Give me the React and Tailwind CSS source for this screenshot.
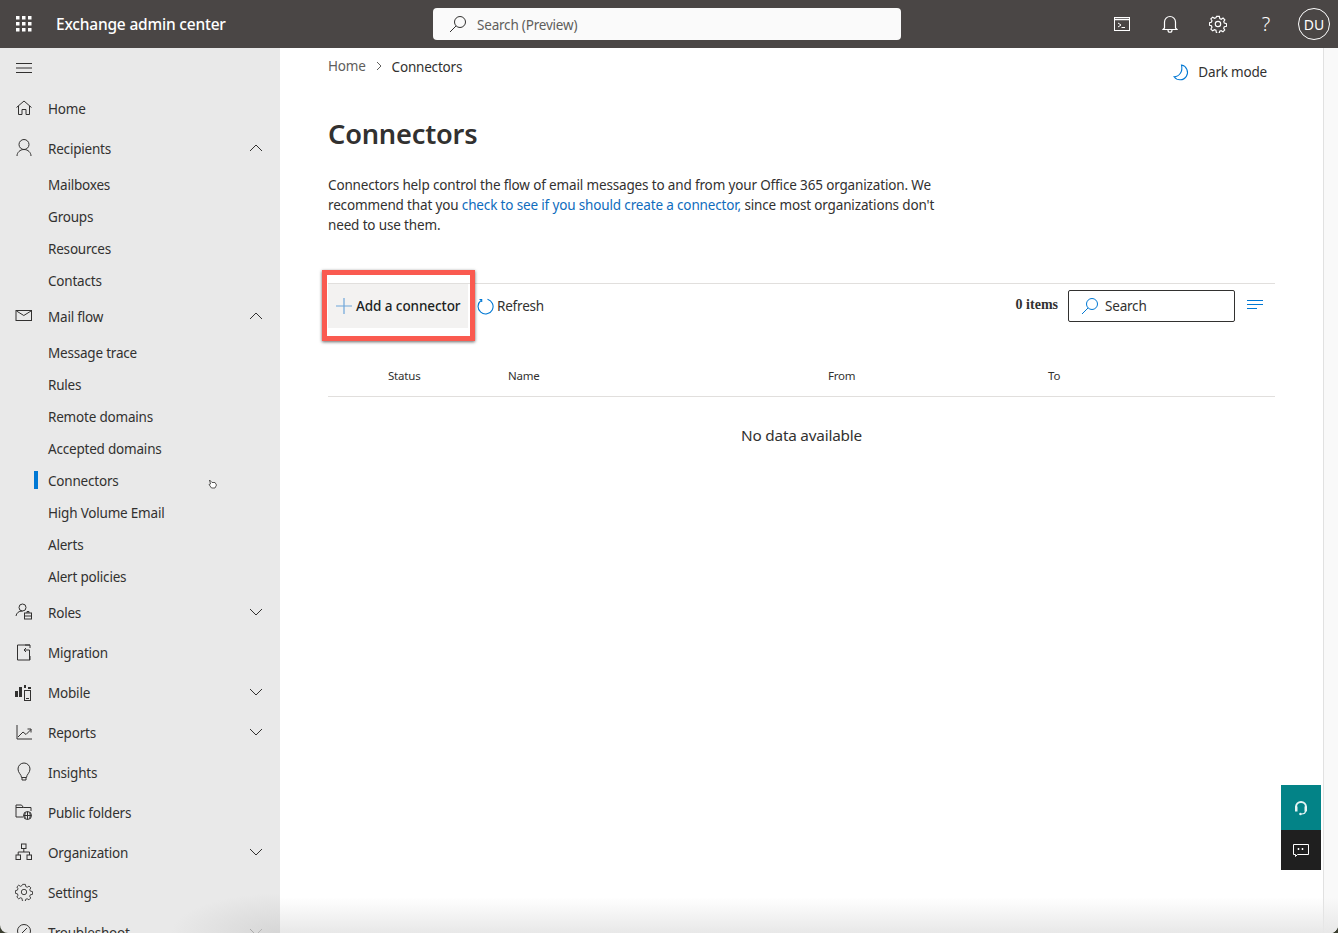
import React from 'react';

const Svg = ({ size = 20, box, strokeWidth = 1, className = '', children }) => (
  <svg width={size} height={size} viewBox={`0 0 ${box || size} ${box || size}`} fill="none" stroke="currentColor" strokeWidth={strokeWidth} className={className}>
    {children}
  </svg>
);

const HomeIcon = () => (
  <Svg>
    <path d="M2.500 9.500 10 3l7.500 6.500M4.500 8v8.500h3.500v-5h4v5h3.500V8" />
  </Svg>
);
const PersonIcon = () => (
  <Svg>
    <circle cx="10" cy="6.500" r="5" />
    <path d="M3 18c0-3.500 3-6.500 7-6.500s7 3 7 6.500" />
  </Svg>
);
const MailIcon = () => (
  <Svg size={18}>
    <rect x="1" y="3.500" width="15.500" height="10" />
    <path d="m1.500 4 7.300 4.500L16 4" />
  </Svg>
);
const RolesIcon = () => (
  <Svg size={18}>
    <circle cx="7.500" cy="4.500" r="3.500" />
    <path d="M1 13c.5-3 2.500-5 6.500-5" />
    <rect x="9.500" y="10" width="7" height="6" />
    <path d="M9.500 13h7M12 10V8.500h2V10" />
  </Svg>
);
const MigrationIcon = () => (
  <Svg>
    <path d="M16 6V3H3.500v15H16v-4" />
    <path d="M16 3h-5M15.500 8H10.500M12 6 10 8l2 2M15.500 8v10" />
  </Svg>
);
const MobileIcon = () => (
  <svg width="18" height="18" viewBox="0 0 18 18" fill="none">
    <rect x="0" y="8" width="3" height="6" fill="#323130" />
    <rect x="4" y="4" width="3" height="10" fill="#323130" />
    <rect x="9" y="2" width="2" height="3" fill="#323130" />
    <rect x="13" y="4" width="3" height="2" fill="#323130" />
    <rect x="9.500" y="7.500" width="6" height="10" stroke="#323130" />
    <path d="M11 15.500h3" stroke="#323130" />
  </svg>
);
const ReportsIcon = () => (
  <Svg>
    <path d="M3 3v14h15M4 15l5-5 3 2.500L17 7.500M13.500 7H17v3.500" />
  </Svg>
);
const BulbIcon = () => (
  <Svg>
    <path d="M7.500 15.500c0-3-3.500-4.500-3.500-8.500a6 6 0 0 1 12 0c0 4-3.500 5.500-3.500 8.500zM8 15.500V18h4v-2.500" />
  </Svg>
);
const FoldersIcon = () => (
  <Svg size={18}>
    <path d="M8 14H1V2h5.500l2 2.500H16V8M1 4.500h7.500" />
    <circle cx="12.500" cy="12.500" r="4" />
    <path d="M8.500 12.500h8M12.500 8.500v8M10.500 9.500c-1 2-1 4 0 6M14.500 9.500c1 2 1 4 0 6" />
  </Svg>
);
const OrgIcon = () => (
  <Svg size={18}>
    <rect x="6.500" y="1" width="4.500" height="4.500" />
    <rect x="1" y="12" width="4.500" height="4.500" />
    <rect x="12" y="12" width="4.500" height="4.500" />
    <path d="M8.800 5.500V9M3.200 12V9h11.300v3" />
  </Svg>
);
const GearIcon = ({ size = 20, strokeWidth = 1 }) => (
  <Svg size={size} box={20} strokeWidth={strokeWidth}>
    <circle cx="10" cy="10" r="3" />
    <path d="M8.500 1.500h3l.5 2.500 1.600.7 2-1.300 2 2-1.200 2 .6 1.600 2.500.6v3l-2.500.5-.7 1.600 1.200 2-2 2-2-1.200-1.600.6-.5 2.400h-3L7.700 17l-1.600-.6-2 1.200-2-2 1.200-2-.6-1.600-2.200-.5v-3l2.100-.5.700-1.600-1.200-2 2-2 2 1.300 1.500-.7z" />
  </Svg>
);
const WrenchIcon = () => (
  <Svg>
    <circle cx="10" cy="9" r="6.500" />
    <path d="m8 11 5-5" />
  </Svg>
);
const Chevron = ({ up }) => (
  <svg width="14" height="8" viewBox="0 0 14 8" fill="none" stroke="#323130" strokeWidth="1">
    <path d={up ? 'M1 7l6-6 6 6' : 'M1 1l6 6 6-6'} />
  </svg>
);
const SearchIcon = ({ color }) => (
  <svg width="18" height="18" viewBox="0 0 18 18" fill="none" stroke={color} strokeWidth="1">
    <circle cx="11" cy="7" r="5.500" />
    <path d="M7 11 1 17" />
  </svg>
);

const navItems = [
  { label: 'Home', icon: <HomeIcon /> },
  { label: 'Recipients', icon: <PersonIcon />, chevron: 'up', children: ['Mailboxes', 'Groups', 'Resources', 'Contacts'] },
  {
    label: 'Mail flow',
    icon: <MailIcon />,
    chevron: 'up',
    children: ['Message trace', 'Rules', 'Remote domains', 'Accepted domains', 'Connectors', 'High Volume Email', 'Alerts', 'Alert policies'],
  },
  { label: 'Roles', icon: <RolesIcon />, chevron: 'down' },
  { label: 'Migration', icon: <MigrationIcon /> },
  { label: 'Mobile', icon: <MobileIcon />, chevron: 'down' },
  { label: 'Reports', icon: <ReportsIcon />, chevron: 'down' },
  { label: 'Insights', icon: <BulbIcon /> },
  { label: 'Public folders', icon: <FoldersIcon /> },
  { label: 'Organization', icon: <OrgIcon />, chevron: 'down' },
  { label: 'Settings', icon: <GearIcon size={18} /> },
  { label: 'Troubleshoot', icon: <WrenchIcon />, chevron: 'down' },
];

const Header = () => (
  <header className="flex h-12 shrink-0 items-center bg-[#4a4645] text-white">
    <div className="flex w-12 justify-center">
      <svg width="16" height="16" viewBox="0 0 16 16" fill="white">
        {[0, 6, 12].map((y) =>
          [0, 6, 12].map((x) => <rect key={`${x}-${y}`} x={x} y={y} width="3.500" height="3.500" />)
        )}
      </svg>
    </div>
    <div className="ml-2 w-[377px] pt-[2px] text-[15.5px] font-medium">Exchange admin center</div>
    <div className="flex h-8 w-[468px] items-center gap-[10px] rounded bg-[#fafafa] pl-4 text-[13.5px] text-[#605e5c]">
      <SearchIcon color="#323130" />
      <span className="pt-[2px]">Search (Preview)</span>
    </div>
    <div className="ml-auto flex items-center pr-2">
      <div className="flex h-12 w-12 items-center justify-center">
        <svg width="18" height="16" viewBox="0 0 18 16" fill="none" stroke="white">
          <rect x="1.500" y="1.500" width="15" height="13" />
          <path d="M1.500 3.500h15" strokeWidth="1.500" />
          <path d="m5 7 3 2-3 2M8.500 11.500h3.500" />
        </svg>
      </div>
      <div className="flex h-12 w-12 items-center justify-center">
        <svg width="16" height="18" viewBox="0 0 16 18" fill="none" stroke="white" strokeWidth="1.200">
          <path d="M2.500 13V7a5.500 5.500 0 0 1 11 0v6l1.500 1.500H1zM6 15c0 3 4 3 4 0" />
        </svg>
      </div>
      <div className="flex h-12 w-12 items-center justify-center">
        <GearIcon size={18} strokeWidth={1.3} />
      </div>
      <div className="flex h-12 w-12 items-center justify-center text-[20px] font-light">?</div>
      <div className="ml-2 flex h-8 w-8 items-center justify-center rounded-full border border-white text-[14px] tracking-normal">DU</div>
    </div>
  </header>
);

const NavRow = ({ item }) => (
  <div className="flex h-10 items-center text-[13.5px] text-[#323130]">
    <div className="flex w-12 justify-center text-[#323130]">{item.icon}</div>
    <span className="pt-[2px]">{item.label}</span>
    {item.chevron && (
      <span className="ml-auto mr-[17px] flex">
        <Chevron up={item.chevron === 'up'} />
      </span>
    )}
  </div>
);

const Sidebar = () => (
  <aside className="relative w-[280px] shrink-0 overflow-hidden bg-[#e9e9e9]">
    <div className="flex h-10 items-center pl-4">
      <svg width="16" height="10" viewBox="0 0 16 10" stroke="#323130" strokeWidth="1">
        <path d="M0 .5h16M0 5h16M0 9.500h16" />
      </svg>
    </div>
    {navItems.map((item) => (
      <div key={item.label}>
        <NavRow item={item} />
        {item.children?.map((child) => (
          <div key={child} className="flex h-8 items-center pl-12 text-[13.5px] text-[#323130]">
            {child === 'Connectors' && <span className="absolute left-[34px] h-[18px] w-1 bg-[#0078d4]" />}
            <span className="pt-[2px]">{child}</span>
          </div>
        ))}
      </div>
    ))}
    <svg className="absolute left-[208px] top-[431px]" width="9" height="10" viewBox="0 0 9 10" fill="white" stroke="#323130" strokeWidth="0.800">
      <path d="M1.500 1 4 3.500 7 3.500 8.500 6 7 9H3.500L1 5.500 2.500 5z" />
    </svg>
    <div className="absolute bottom-0 right-0 h-[40px] w-[110px] bg-[radial-gradient(ellipse_at_bottom_right,#d6d6d6,transparent_70%)]" />
  </aside>
);

const ToolbarButton = ({ icon, label, className }) => (
  <div className={`flex items-center text-[13.5px] ${className}`}>
    {icon}
    <span>{label}</span>
  </div>
);

const Main = () => (
  <main className="relative flex-1 bg-white pl-12 pr-[63px]">
    <div className="flex h-12 items-start justify-between">
      <div className="mt-[7px] flex items-center text-[13.5px]">
        <span className="text-[#605e5c]">Home</span>
        <svg className="mx-[9px]" width="8" height="10" viewBox="0 0 8 10" fill="none" stroke="#605e5c">
          <path d="m2 1 4 4-4 4" />
        </svg>
        <span className="pt-[2px] text-[#323130]">Connectors</span>
      </div>
      <div className="mt-[14px] mr-2 flex items-center gap-[8px] text-[13.5px] text-[#323130]">
        <svg width="17" height="17" viewBox="0 0 16 16" fill="none" stroke="#0078d4">
          <path d="M8 1A7 7 0 1 1 1 12C6 12 9.500 7 8 1z" />
        </svg>
        <span>Dark mode</span>
      </div>
    </div>
    <h1 className="mt-[19px] text-[27.2px] leading-[38px] font-semibold text-[#323130]">Connectors</h1>
    <p className="mt-[22px] w-[612px] text-[13.5px] leading-5 tracking-[-0.15px] text-[#323130]">
      Connectors help control the flow of email messages to and from your Office 365 organization. We recommend that you{' '}
      <span className="text-[#0f6cbd]">check to see if you should create a connector,</span> since most organizations don't need to use them.
    </p>
    <div className="relative mt-[48px] flex h-[46px] items-center border-t border-[#e1dfdd] pb-[2px]">
      <ToolbarButton
        className="h-[44px] w-[140px] gap-[4px] self-start bg-[#f3f2f1] pl-2 font-medium tracking-[-0.08px] text-[#201f1e]"
        label="Add a connector"
        icon={
          <svg width="16" height="16" viewBox="0 0 16 16" stroke="#6ea6da" strokeWidth="1.200">
            <path d="M8 0v16M0 8h16" />
          </svg>
        }
      />
      <ToolbarButton
        className="ml-[9px] gap-[3px] pt-[1px] text-[#323130]"
        label="Refresh"
        icon={
          <svg width="17" height="17" viewBox="0 0 17 17" fill="none" stroke="#0078d4" strokeWidth="1.100">
            <path d="M10.500 1.200a7.500 7.500 0 1 1-6.500 1.300M2.500 1.500h2.200v2.500" />
          </svg>
        }
      />
      <div className="ml-auto flex items-center">
        <span className="mr-[10px] mb-[2px] font-['Liberation_Serif',serif] text-[14px] font-bold tracking-normal text-[#323130]">0 items</span>
        <div className="flex h-8 w-[167px] items-center gap-[6px] rounded-[2px] border border-[#323130] pl-3 text-[13.5px] text-[#323130]">
          <SearchIcon color="#0078d4" />
          <span className="pt-[2px]">Search</span>
        </div>
        <div className="mr-[12px] ml-3 mb-[1px]">
          <svg width="16" height="10" viewBox="0 0 16 10" stroke="#0078d4">
            <path d="M0 .500h16M0 4.500h16M0 8.500h10" />
          </svg>
        </div>
      </div>
      {/* red highlight drawn over the screenshot */}
      <div className="absolute -left-[6px] -top-[14px] h-[71px] w-[153px] border-[5px] border-[#fa5a50] shadow-[0_1px_3px_rgba(0,0,0,0.6)]" />
    </div>
    <div className="mt-[20px] flex h-[48px] items-center border-b border-[#e1dfdd] pt-[14px] pb-[8px] text-[11.5px] text-[#323130]">
      <span className="ml-[60px] w-[120px]">Status</span>
      <span className="w-[320px]">Name</span>
      <span className="w-[220px]">From</span>
      <span>To</span>
    </div>
    <div className="mt-[26px] text-center text-[15.3px] leading-6 text-[#323130]">No data available</div>

    <div className="absolute right-[17px] top-[737px] flex w-10 flex-col">
      <div className="flex h-[45px] items-center justify-center bg-[#038387]">
        <svg width="14" height="16" viewBox="0 0 14 16" fill="none" stroke="#e6f4f4">
          <path d="M2 7a5 5 0 0 1 10 0" strokeWidth="2" />
          <rect x="1" y="6.500" width="2.500" height="5" fill="#e6f4f4" stroke="none" />
          <rect x="10.500" y="6.500" width="2.500" height="5" fill="#e6f4f4" stroke="none" />
          <path d="M11.500 11c0 2-2 3-4 3" strokeWidth="1.200" />
          <circle cx="6.500" cy="14" r="1.300" fill="#e6f4f4" stroke="none" />
        </svg>
      </div>
      <div className="flex h-10 items-center justify-center bg-[#1f1f1f]">
        <svg width="16" height="15" viewBox="0 0 16 15" fill="none" stroke="white">
          <path d="M.5 1.500h15v10H4.500l-2 2v-2h-2z" />
          <path d="M5.500 5v2M9.500 5v2" strokeWidth="1.500" />
        </svg>
      </div>
    </div>
    <div className="absolute inset-y-0 right-0 w-[15px] border-l border-[#e1e1e1] bg-[#f9f9f9]" />
    <div className="pointer-events-none absolute inset-x-0 bottom-0 h-[36px] bg-gradient-to-b from-transparent to-[#e8e8e8]" />
  </main>
);

export default function App() {
  return (
    <div className="h-[933px] w-[1338px] overflow-hidden bg-[#3b3f30] font-['Noto_Sans',sans-serif] tracking-[-0.2px]">
      <div className="flex h-full flex-col overflow-hidden rounded-b-[8px]">
        <Header />
        <div className="flex min-h-0 flex-1">
          <Sidebar />
          <Main />
        </div>
      </div>
    </div>
  );
}
